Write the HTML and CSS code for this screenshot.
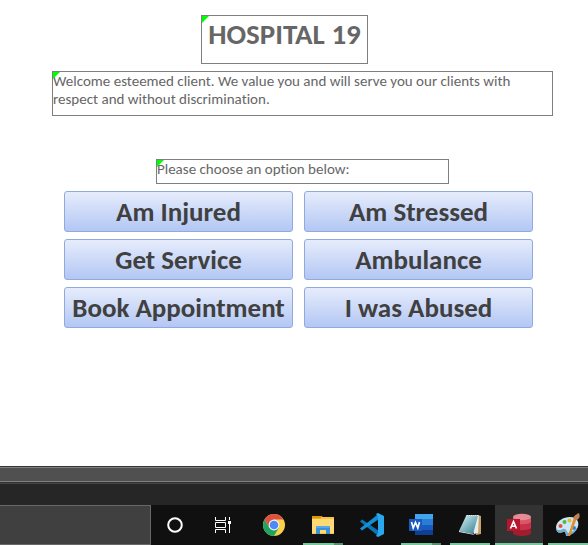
FILE: index.html
```html
<!DOCTYPE html>
<html lang="en">
<head>
<meta charset="utf-8">
<meta name="viewport" content="width=device-width, initial-scale=1">
<title>Hospital 19</title>
<link rel="stylesheet" href="styles.css">
</head>
<body>
<main class="form">
  <h1 class="label title">HOSPITAL 19</h1>
  <p class="label welcome">Welcome esteemed client. We value you and will serve you our clients with respect and without discrimination.</p>
  <p class="label prompt">Please choose an option below:</p>
  <div class="options">
    <button type="button">Am Injured</button>
    <button type="button">Am Stressed</button>
    <button type="button">Get Service</button>
    <button type="button">Ambulance</button>
    <button type="button">Book Appointment</button>
    <button type="button">I was Abused</button>
  </div>
</main>
<footer>
  <div class="scroll-strip"></div>
  <div class="status-bar"></div>
  <nav class="taskbar" aria-label="Taskbar">
    <input class="search" type="text" aria-label="Search">
    <button class="task" type="button" aria-label="Cortana">
      <svg width="24" height="24" viewBox="0 0 24 24"><circle cx="11" cy="12" r="6.8" fill="none" stroke="#fff" stroke-width="2"/></svg>
    </button>
    <button class="task" type="button" aria-label="Task view">
      <svg width="24" height="24" viewBox="0 0 24 24" fill="none" stroke="#fff"><path d="M2.5 4v3.500h10V4M2.500 20v-3.500h10V20M2.500 9.500h10v5h-10zM16.500 4v3M16.500 11v9"/><path d="M15 8h3v3h-3z" fill="#fff" stroke="none"/></svg>
    </button>
    <button class="task" type="button" aria-label="Chrome">
      <svg width="24" height="24" viewBox="0 0 24 24"><circle cx="12" cy="12" r="11" fill="#fbd14b"/><path d="M2.500 6.500A11 11 0 0 1 21.500 6.500H12L7.200 14.700z" fill="#dd5144"/><path d="M2.500 6.500L7.200 14.700 16.800 14.700 12 23A11 11 0 0 1 2.500 6.500z" fill="#1da462"/><circle cx="12" cy="12" r="5.400" fill="#f4f4f4"/><circle cx="12" cy="12" r="4.300" fill="#4c8bf5"/></svg>
    </button>
    <button class="task grouped" type="button" aria-label="File Explorer">
      <svg width="24" height="24" viewBox="0 0 24 24"><path d="M1 3h9l2 1h11v17H1z" fill="#f5c24c"/><path d="M1 3h9v2.500H1z" fill="#dc9800"/><path d="M1 6h22v14H1z" fill="#ffd976"/><path d="M5 21v-8h14v8h-4v-4H9v4z" fill="#3d91d8"/><path d="M5 13h14v2H5z" fill="#58a9e8"/></svg>
    </button>
    <button class="task" type="button" aria-label="Visual Studio Code">
      <svg width="24" height="24" viewBox="0 0 24 24"><path d="M0 8.500L2 6.500 19 18v5.500z" fill="#0877b9"/><path d="M0 15.500L2 17.500 19 6V.5z" fill="#148fd2"/><path d="M18 0l6 3v18l-6 3-2-1 2-3V4l-2-3z" fill="#29a8ed"/></svg>
    </button>
    <button class="task grouped" type="button" aria-label="Word">
      <svg width="24" height="24" viewBox="0 0 24 24"><path d="M6 1h18v6H6z" fill="#41a5ee"/><path d="M6 6h18v6H6z" fill="#2b7cd3"/><path d="M6 12h18v5H6z" fill="#185abd"/><path d="M6 17h18v5H6z" fill="#103f91"/><path d="M0 6h13v12H0z" fill="#185abd"/><path d="M2.500 9l1.700 6L6.500 9.500 8.800 15l1.700-6" fill="none" stroke="#fff" stroke-width="1.700"/></svg>
    </button>
    <button class="task open" type="button" aria-label="Notepad">
      <svg width="24" height="24" viewBox="0 0 24 24"><defs><linearGradient id="pad" x1="0" y1="0" x2="1" y2="1"><stop offset="0" stop-color="#dff4f5"/><stop offset=".5" stop-color="#80b8c2"/><stop offset="1" stop-color="#327d8e"/></linearGradient></defs><path d="M20 2l3 1v18l-5 1z" fill="#c4a46c"/><path d="M8 2h13l-1 18-4 1z" fill="#e9ecec"/><path d="M8 3h12l-5 18-14-3z" fill="url(#pad)"/><path d="M1 18l14 3 2 1-16-3z" fill="#eef5f5"/><path d="M8 2.500h13" stroke="#b7bcbc" stroke-dasharray="1 1"/></svg>
    </button>
    <button class="task open active" type="button" aria-label="Access">
      <svg width="24" height="24" viewBox="0 0 24 24"><path d="M6 4v16c0 4 18 4 18 0V4z" fill="#9f1d2c"/><path d="M6 4v11c3 3 15 3 18 0V4z" fill="#c8314b"/><path d="M6 4v5c3 3 15 3 18 0V4z" fill="#db5767"/><ellipse cx="15" cy="4" rx="9" ry="3.200" fill="#e68a96"/><path d="M0 6h13v12H0z" fill="#b6162d"/><path d="M3.500 15.500L6.500 8.500l3 7M4.500 13.200h4" fill="none" stroke="#fff" stroke-width="1.600"/></svg>
    </button>
    <button class="task open" type="button" aria-label="Paint">
      <svg width="24" height="24" viewBox="0 0 24 24"><path d="M0 14C1 6 12 2 19 5c6 4 3 12-2 15-3 2-5 3-7 3 0-3-1-5-3-4-4 2-7 0-7-5z" fill="#cce7f5"/><path d="M0 15c1 3 5 2 7 1 3-1 4 3 5 4 5-1 9-4 10-8-1 7-7 11-12 11 0-3-1-5-3-4-4 2-7 0-7-4z" fill="#71aac9"/><circle cx="4.500" cy="13" r="2" fill="#e4523d"/><circle cx="8.500" cy="9" r="2" fill="#55b63e"/><circle cx="13.500" cy="7.500" r="2" fill="#d6c440"/><circle cx="18" cy="15" r="2" fill="#278ccd"/><path d="M18 4l3 1-7 18h-2z" fill="#e68c29"/><path d="M17 5c1-2 3-4 6-5 1 3 1 5-2 7z" fill="#bc8057"/></svg>
    </button>
  </nav>
</footer>
</body>
</html>
```
FILE: styles.css
```css
* { box-sizing: border-box; }
body {
  margin: 0;
  min-height: 100vh;
  display: flex;
  flex-direction: column;
  overflow-x: hidden;
  background: #fff;
  font-family: Carlito, Lato, "Liberation Sans", sans-serif;
  font-variant-ligatures: none;
}
.form {
  flex: 1;
  display: flex;
  flex-direction: column;
  padding: 15px 35px 15px 52px;
}
.label {
  position: relative;
  margin: 0;
  border: 1px solid #7f7f7f;
  color: #666;
  font-size: 15px;
  line-height: 18px;
}
.label::before {
  content: "";
  position: absolute;
  top: 0;
  left: 0;
  border-top: 7px solid #0f0;
  border-right: 7px solid transparent;
}
.title {
  align-self: center;
  margin-right: 36px;
  padding: 1px 6px 11px;
  font-size: 29px;
  line-height: 35px;
}
.welcome {
  margin-top: 7px;
  padding-bottom: 7px;
}
.prompt {
  align-self: center;
  width: 58.5%;
  margin-top: 43px;
  padding-bottom: 5px;
}
.options {
  display: grid;
  grid-template-columns: 1fr 1fr;
  gap: 7px 11px;
  margin: 7px 20px 0 12px;
}
.options button {
  height: 41px;
  padding: 0;
  border: 1px solid #8faadc;
  border-radius: 3px;
  background: linear-gradient(#e6ecfb, #b3c7f4);
  color: #404040;
  font: bold 27px/39px Carlito, Lato, "Liberation Sans", sans-serif;
  font-variant-ligatures: none;
  white-space: nowrap;
}
.scroll-strip {
  height: 17px;
  border-top: 1px solid #333;
  border-bottom: 1px solid #333;
  background: #505050;
  box-shadow: inset 0 1px #808080, inset 0 -1px #808080;
}
.status-bar {
  height: 22px;
  border-top: 1px solid #444;
  background: #262626;
}
.taskbar {
  display: flex;
  gap: 1px;
  height: 40px;
  overflow: hidden;
  background: #101010;
}
.search {
  flex: 1 1 0;
  min-width: 0;
  border: 1px solid #686868;
  border-left: 0;
  border-radius: 0;
  background: #404040;
  color: #fff;
}
.task {
  flex: none;
  display: flex;
  align-items: center;
  justify-content: center;
  width: 48px;
  padding: 0;
  border: 0;
  background: #101010 no-repeat center bottom / 40px 2px;
}
.task:last-child { margin-right: -4px; }
.open { background-image: linear-gradient(#76c79b, #76c79b); }
.grouped { background-image: linear-gradient(90deg, #76c79b 31px, #57906f 31px); }
.active {
  background-color: #333;
  background-size: 100% 2px;
}
```
